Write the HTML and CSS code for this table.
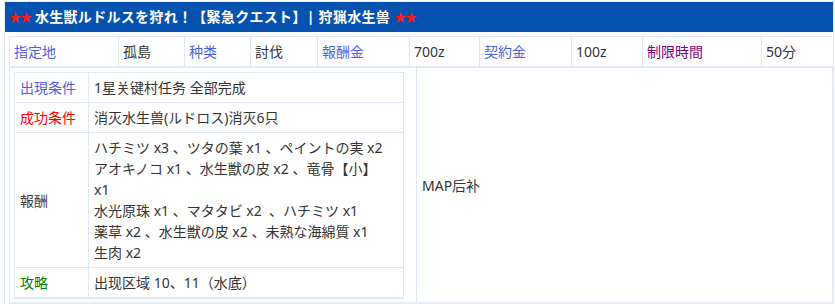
FILE: index.html
```html
<!DOCTYPE html>
<html lang="ja">
<head>
<meta charset="utf-8">
<title>水生獣ルドルスを狩れ！</title>
<link rel="stylesheet" href="styles.css">
</head>
<body>
<div class="quest">
  <div class="quest-title"><span class="stars">★★</span> 水生獣ルドルスを狩れ！【緊急クエスト】| 狩猟水生兽 <span class="stars">★★</span></div>
  <table class="info">
    <tr>
      <td class="c1 lbl blue">指定地</td>
      <td class="c2">孤島</td>
      <td class="c3 lbl blue">种类</td>
      <td class="c4">討伐</td>
      <td class="c5 lbl blue">報酬金</td>
      <td class="c6">700z</td>
      <td class="c7 lbl blue">契約金</td>
      <td class="c8">100z</td>
      <td class="c9 lbl purple">制限時間</td>
      <td class="c10">50分</td>
    </tr>
  </table>
  <table class="body">
    <tr>
      <td class="left">
        <table class="detail">
          <tr><td class="k blue">出現条件</td><td class="v">1星关键村任务 全部完成</td></tr>
          <tr><td class="k red">成功条件</td><td class="v">消灭水生兽(ルドロス)消灭6只</td></tr>
          <tr><td class="k dark">報酬</td><td class="v">ハチミツ x3 、ツタの葉 x1 、ペイントの実 x2<br>アオキノコ x1 、水生獣の皮 x2 、竜骨【小】<br>x1<br>水光原珠 x1 、マタタビ x2 &nbsp;、ハチミツ x1<br>薬草 x2 、水生獣の皮 x2 、未熟な海綿質 x1<br>生肉 x2</td></tr>
          <tr><td class="k green">攻略</td><td class="v">出现区域 10、11（水底）</td></tr>
        </table>
      </td>
      <td class="right">MAP后补</td>
    </tr>
  </table>
</div>
</body>
</html>
```
FILE: styles.css
```css
html, body {
  margin: 0;
  padding: 0;
  background: #ffffff;
}
body {
  font-family: "Noto Sans", "Noto Sans CJK JP", sans-serif;
  font-size: 14px;
  line-height: 21px;
  color: #333333;
}
td {
  box-sizing: border-box;
}
.quest {
  margin: 1px 1px 0 4px;
  border: 1px solid #e3ecf7;
  border-bottom: none;
}
.quest-title {
  background: #0652b0;
  color: #ffffff;
  font-weight: bold;
  font-size: 14px;
  line-height: 21px;
  letter-spacing: 0.3px;
  padding: 4px 4px;
  white-space: nowrap;
}
.stars {
  color: #ff1a1a;
  font-size: 12px;
  letter-spacing: -1px;
}
table {
  border-collapse: collapse;
}
.info {
  margin: 4px 0 0 4px;
  width: 824px;
  table-layout: fixed;
  border: 1px solid #dfe9f5;
  border-bottom: 2px solid #dfe9f5;
}
.info td {
  border: 1px solid #dfe9f5;
  padding: 4px 4px;
  white-space: nowrap;
  overflow: hidden;
}
.c1 { width: 109px; }
.c2 { width: 66px; }
.c3 { width: 66px; }
.c4 { width: 67px; }
.c5 { width: 92px; }
.c6 { width: 70px; }
.c7 { width: 92px; }
.c8 { width: 71px; }
.c9 { width: 119px; }
.c10 { width: 72px; }
.body {
  margin: 0 0 0 4px;
  width: 824px;
  table-layout: fixed;
  border: 1px solid #dfe9f5;
  border-top: none;
  border-bottom: 3px solid #e3ecf7;
}
.body > tbody > tr > td {
  border: 1px solid #dfe9f5;
  border-top: none;
}
.left {
  width: 407px;
  padding: 4px 12px 3px 4px;
  vertical-align: top;
}
.right {
  padding: 4px 5px;
  vertical-align: middle;
}
.detail {
  width: 390px;
  border: 1px solid #dfe9f5;
  border-bottom-width: 2px;
}
.detail td {
  border: 1px solid #dfe9f5;
  padding: 4px 5px;
  vertical-align: middle;
}
.detail .k {
  width: 74px;
  white-space: nowrap;
}
.blue { color: #4f5fdc; }
.purple { color: #800080; }
.red { color: #ff0000; }
.green { color: #008000; }
.dark { color: #4a3b36; }
```
